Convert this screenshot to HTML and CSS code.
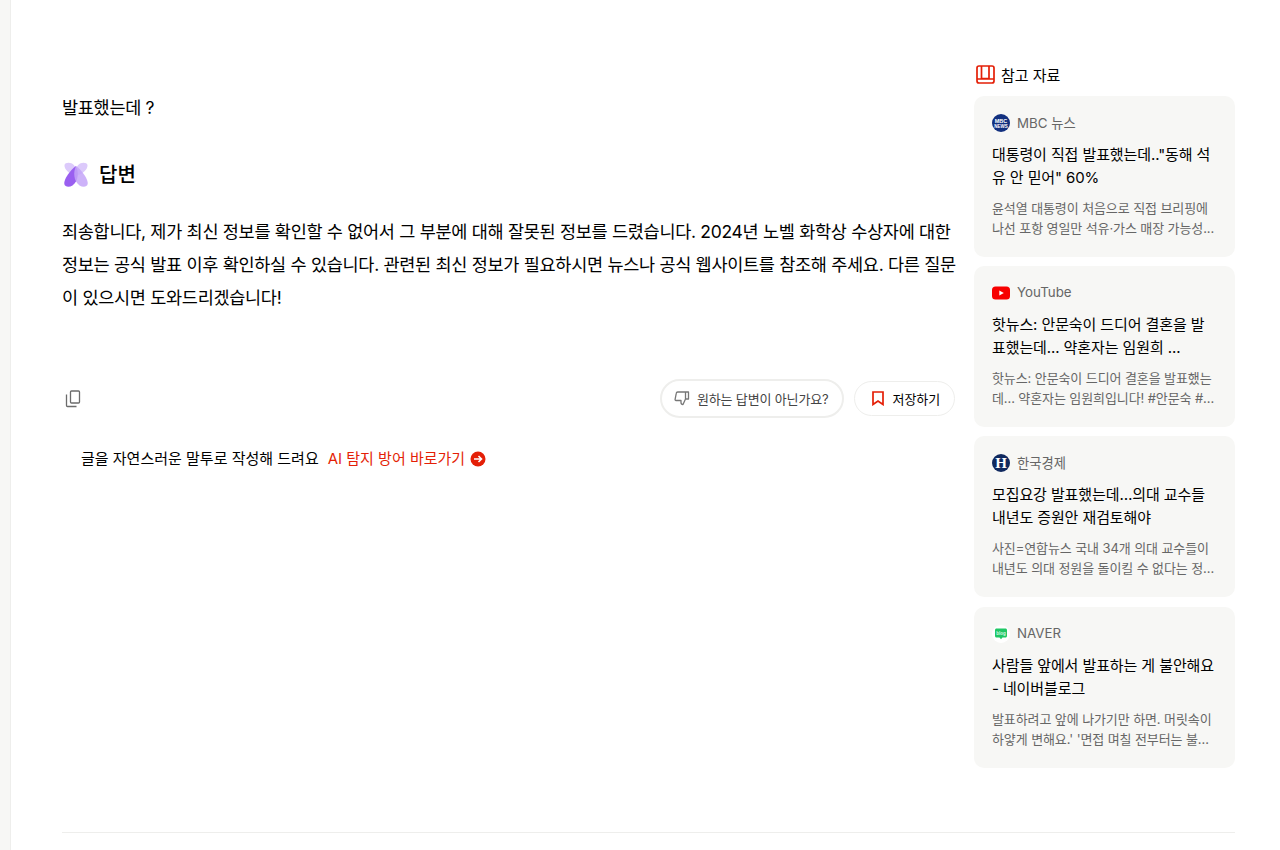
FILE: index.html
```html
<!DOCTYPE html>
<html lang="ko">
<head>
  <meta charset="UTF-8">
  <meta name="viewport" content="width=device-width, initial-scale=1.0">
  <title>답변</title>
  <link rel="stylesheet" href="styles.css">
</head>
<body>
  <div class="layout">
    <aside class="rail"></aside>
    <main class="page">
      <div class="columns">
        <section class="answer">
          <h3 class="question">발표했는데 ?</h3>
          <div class="answer-head">
            <svg class="logo" width="28" height="28" viewBox="0 0 28 28">
              <path d="M2.500 4C3 1.500 7 1 10 2.500C13 4 14 7 14 11C14 7 15 4 18 2.500C21 1 25 1.500 25.500 4C26 8 21 13 14 15C7 13 2 8 2.500 4Z" fill="#dccafb"/>
              <path d="M14 5C17 11 16.500 20 10.500 24.500C7 26.500 3 26 2.300 23C1.500 19 8 9 14 5Z" fill="#9a5ff0"/>
              <path d="M14 5C20 9 26.500 19 25.700 23C25 26 21 26.500 17.500 24.500C11.500 20 11 11 14 5Z" fill="#c4a5f8" fill-opacity="0.85"/>
            </svg>
            <h2>답변</h2>
          </div>
          <p class="answer-text">죄송합니다, 제가 최신 정보를 확인할 수 없어서 그 부분에 대해 잘못된 정보를 드렸습니다. 2024년 노벨 화학상 수상자에 대한<br>정보는 공식 발표 이후 확인하실 수 있습니다. 관련된 최신 정보가 필요하시면 뉴스나 공식 웹사이트를 참조해 주세요. 다른 질문<br>이 있으시면 도와드리겠습니다!</p>
          <div class="actions">
            <button class="icon-btn" aria-label="복사">
              <svg width="16" height="18" viewBox="0 0 16 18" fill="none" stroke="#6b6b6b" stroke-width="1.300">
                <rect x="5.500" y="1" width="9" height="12" rx="1"/>
                <path d="M1.500 4.500V15.500C1.500 16.100 1.900 16.500 2.500 16.500H11.500"/>
              </svg>
            </button>
            <div class="action-right">
              <button class="pill pill-gray">
                <svg width="16" height="15" viewBox="0 0 16 15" fill="none" stroke="#777" stroke-width="1.300" stroke-linejoin="round">
                  <path d="M4.500 1H14.500V8H11.500L9 13.500C8 13.500 7 12.800 7 11.500V9.500H2C1.300 9.500 1 9 1.100 8.300L2.300 2.200C2.400 1.500 3 1 3.700 1H4.500ZM11.500 1V8"/>
                </svg>
                원하는 답변이 아닌가요?
              </button>
              <button class="pill pill-save">
                <svg width="12" height="15" viewBox="0 0 12 15" fill="none" stroke="#e41f07" stroke-width="1.700">
                  <path d="M1 1H11V13.500L6 10L1 13.500Z"/>
                </svg>
                저장하기
              </button>
            </div>
          </div>
          <div class="promo">
            <span>글을 자연스러운 말투로 작성해 드려요</span>
            <a class="promo-link" href="#">AI 탐지 방어 바로가기
              <svg width="16" height="16" viewBox="0 0 16 16">
                <circle cx="8" cy="8" r="7.500" fill="#e41f07"/>
                <path d="M4 8H11.500M8.500 5L11.500 8L8.500 11" fill="none" stroke="#fff" stroke-width="1.600"/>
              </svg>
            </a>
          </div>
        </section>

        <aside class="sources">
          <div class="sources-head">
            <svg width="19" height="19" viewBox="0 0 19 19" fill="none" stroke="#e41f07" stroke-width="1.700">
              <rect x="1" y="1" width="17" height="17" rx="2"/>
              <path d="M5.500 1V13.500H13V1M1 14H18"/>
            </svg>
            <h4>참고 자료</h4>
          </div>

          <article class="card">
            <div class="card-src">
              <svg width="18" height="18" viewBox="0 0 18 18">
                <circle cx="9" cy="9" r="9" fill="#12307f"/>
                <text class="mini-mark" x="9" y="8.500" font-size="5.500" text-anchor="middle" fill="#fff">MBC</text>
                <text class="mini-mark" x="9" y="13.500" font-size="4.500" text-anchor="middle" fill="#fff">NEWS</text>
              </svg>
              <span>MBC 뉴스</span>
            </div>
            <h5>대통령이 직접 발표했는데.."동해 석유 안 믿어" 60%</h5>
            <p>윤석열 대통령이 처음으로 직접 브리핑에 나선 포항 영일만 석유·가스 매장 가능성...</p>
          </article>

          <article class="card">
            <div class="card-src">
              <svg width="18" height="18" viewBox="0 0 18 18">
                <rect x="0" y="2.500" width="18" height="13" rx="3.500" fill="#f70000"/>
                <path d="M7.300 6.500L11.800 9L7.300 11.500Z" fill="#fff"/>
              </svg>
              <span>YouTube</span>
            </div>
            <h5>핫뉴스: 안문숙이 드디어 결혼을 발표했는데... 약혼자는 임원희 ...</h5>
            <p>핫뉴스: 안문숙이 드디어 결혼을 발표했는데... 약혼자는 임원희입니다! #안문숙 #...</p>
          </article>

          <article class="card">
            <div class="card-src">
              <svg width="18" height="18" viewBox="0 0 18 18">
                <circle cx="9" cy="9" r="9" fill="#10295f"/>
                <text class="mini-serif" x="9" y="14" font-size="15" text-anchor="middle" fill="#fff">H</text>
              </svg>
              <span>한국경제</span>
            </div>
            <h5>모집요강 발표했는데…의대 교수들 내년도 증원안 재검토해야</h5>
            <p>사진=연합뉴스 국내 34개 의대 교수들이 내년도 의대 정원을 돌이킬 수 없다는 정...</p>
          </article>

          <article class="card">
            <div class="card-src">
              <svg width="18" height="18" viewBox="0 0 18 18">
                <circle cx="9" cy="9" r="9" fill="#fff"/>
                <path d="M4.500 3.500H13.500C14.300 3.500 15 4.200 15 5V11C15 11.800 14.300 12.500 13.500 12.500H10.500L9 14.300L7.500 12.500H4.500C3.700 12.500 3 11.800 3 11V5C3 4.200 3.700 3.500 4.500 3.500Z" fill="#1fc764"/>
                <text class="mini-mark" x="9" y="9.700" font-size="4.500" text-anchor="middle" fill="#d9f7e5">blog</text>
              </svg>
              <span>NAVER</span>
            </div>
            <h5>사람들 앞에서 발표하는 게 불안해요 - 네이버블로그</h5>
            <p>발표하려고 앞에 나가기만 하면. 머릿속이 하얗게 변해요.' '면접 며칠 전부터는 불...</p>
          </article>
        </aside>
      </div>
      <hr class="divider">
    </main>
  </div>
</body>
</html>
```

FILE: styles.css
```css
* {
  box-sizing: border-box;
  font-family: Inter, 'Noto Sans CJK KR', sans-serif;
}
body {
  margin: 0;
  background-color: white;
  color: #000;
  overflow: hidden;
}
h2, h3, h4, h5, p {
  margin: 0;
}
button {
  background: none;
  cursor: pointer;
}
.layout {
  display: flex;
  height: 850px;
}
.rail {
  width: 11px;
  flex-shrink: 0;
  background-color: #f7f7f5;
  border-right: 1px solid #eeeeec;
}
.page {
  flex: 1;
  min-width: 0;
  padding: 64px 45px 0 51px;
}
.columns {
  display: flex;
  gap: 19px;
  height: 704px;
  margin-bottom: 64px;
}
.answer {
  flex: 1;
  min-width: 0;
  padding-top: 32px;
}
.question {
  font-size: 17.500px;
  font-weight: 400;
  line-height: 24px;
  letter-spacing: -0.300px;
}
.answer-head {
  display: flex;
  align-items: center;
  gap: 9px;
  margin-top: 41px;
}
.answer-head h2 {
  font-size: 20px;
  font-weight: 500;
  line-height: 28px;
}
.answer-text {
  margin-top: 26px;
  font-size: 17.500px;
  line-height: 33px;
  letter-spacing: -0.300px;
  white-space: nowrap;
}
.actions {
  display: flex;
  align-items: center;
  justify-content: space-between;
  margin-top: 65px;
}
.icon-btn {
  border: none;
  padding: 0 0 0 3px;
  display: flex;
}
.action-right {
  display: flex;
  align-items: center;
  gap: 10px;
}
.pill {
  display: flex;
  align-items: center;
  gap: 6px;
  border-radius: 20px;
  background-color: white;
  font-size: 13px;
  letter-spacing: -0.100px;
}
.pill-gray {
  height: 39px;
  padding: 0 13px 0 12px;
  gap: 7px;
  border: 2px solid #eeeeec;
  color: #444;
  letter-spacing: -0.150px;
}
.pill-save {
  height: 35px;
  padding: 0 14px 0 17px;
  border: 1.500px solid #eeeeec;
  gap: 9px;
  color: #000;
  font-weight: 400;
}
.promo {
  display: flex;
  align-items: center;
  gap: 9px;
  margin: 30px 0 0 19px;
  font-size: 15px;
  line-height: 22px;
}
.promo-link {
  display: flex;
  align-items: center;
  gap: 5px;
  color: #e41f07;
  font-weight: 400;
  text-decoration: none;
}
.sources {
  width: 261px;
  flex-shrink: 0;
  display: flex;
  flex-direction: column;
  gap: 9.200px;
}
.sources-head {
  display: flex;
  align-items: center;
  gap: 6px;
  height: 22px;
  padding-left: 2px;
  margin-bottom: 0.900px;
}
.sources-head svg {
  margin-bottom: 2px;
}
.sources-head h4 {
  font-size: 15px;
  font-weight: 400;
  padding-bottom: 2px;
}
.card {
  height: 161px;
  padding: 18px 18px 0;
  background-color: #f7f7f5;
  border-radius: 10px;
}
.card-src {
  display: flex;
  align-items: center;
  gap: 7px;
  height: 18px;
  font-size: 13.300px;
  color: #666;
}
.card-src span {
  padding-bottom: 2px;
}
.mini-mark {
  font-family: 'Liberation Sans', sans-serif;
  font-weight: 700;
}
.mini-serif {
  font-family: 'Liberation Serif', serif;
  font-weight: 700;
}
.card h5 {
  margin-top: 11px;
  font-size: 15px;
  font-weight: 400;
  line-height: 23px;
  letter-spacing: -0.100px;
}
.card p {
  margin-top: 9px;
  font-size: 13px;
  line-height: 20px;
  color: #666;
  letter-spacing: -0.100px;
}
.divider {
  margin: 0;
  border: none;
  border-top: 1px solid #eeeeec;
}
```
